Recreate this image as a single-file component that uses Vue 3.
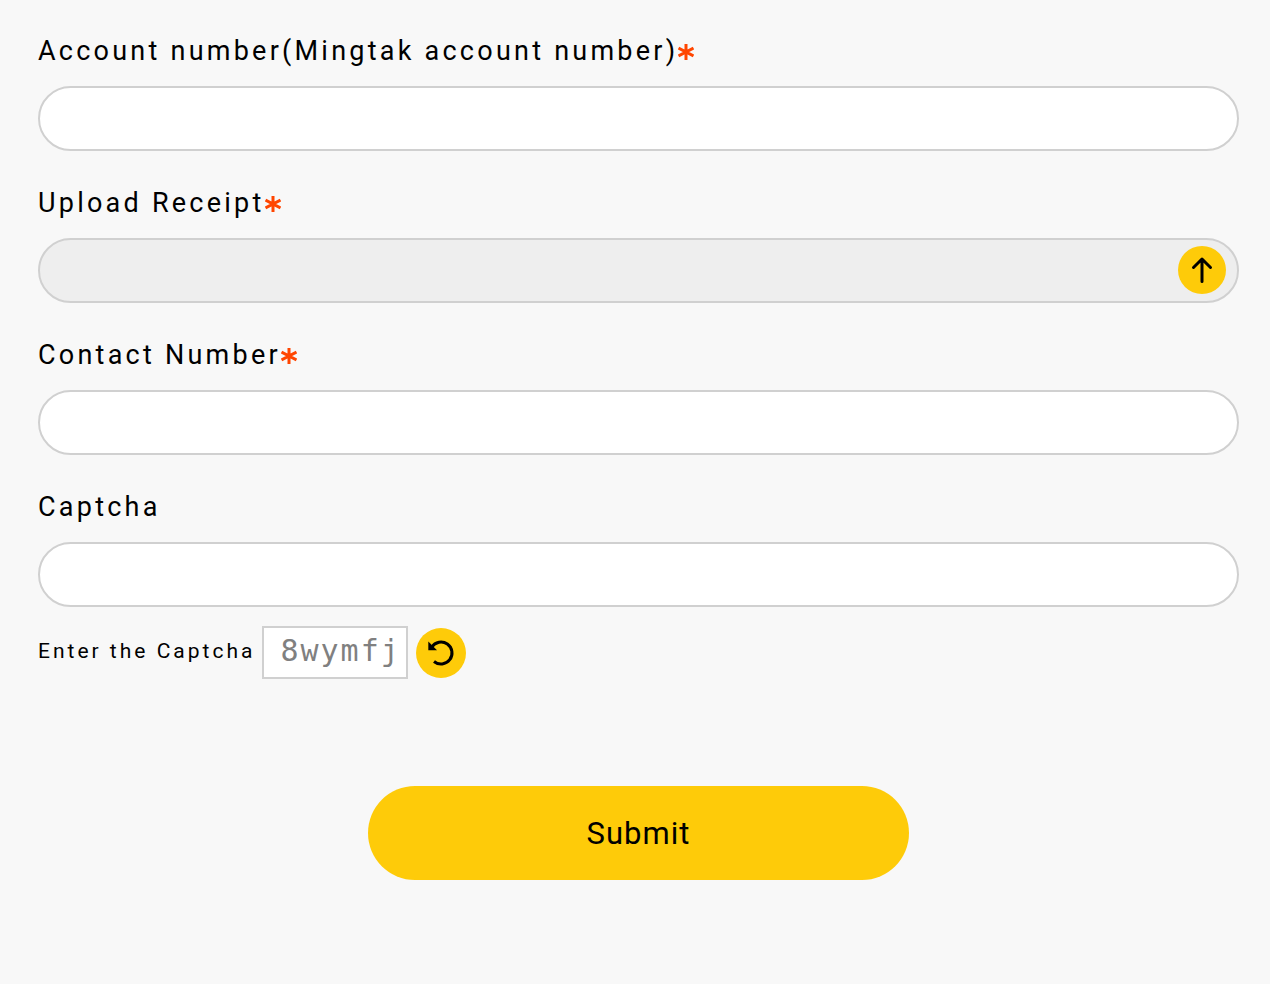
<template>
  <form class="receipt-form" @submit.prevent>
    <div v-for="field in fields" :key="field.id" class="field">
      <label :for="field.id" class="field-label">
        <span>{{ field.label }}</span>
        <svg v-if="field.required" class="required" viewBox="0 0 16 16" aria-hidden="true">
          <path d="M8 0v16M.500 4l15 8M15.500 4L.500 12" />
        </svg>
      </label>
      <div class="control">
        <input
          :id="field.id"
          v-model="form[field.id]"
          type="text"
          class="input"
          :required="field.required"
          :disabled="field.upload"
        >
        <button v-if="field.upload" type="button" class="round-btn upload-btn" aria-label="Choose file">
          <svg viewBox="0 0 48 48" aria-hidden="true">
            <path d="M24 35.500V13M15.500 21.500L24 13l8.500 8.500" />
          </svg>
        </button>
      </div>
    </div>

    <div class="captcha-row">
      <span class="captcha-hint">Enter the Captcha</span>
      <span class="captcha-code">{{ captcha }}</span>
      <button type="button" class="round-btn refresh-btn" aria-label="Refresh captcha">
        <svg viewBox="0 0 50 50" aria-hidden="true">
          <path d="M15.800 19A11 11 0 1 1 18 33.500" />
          <path class="arrow-head" d="M12.300 13.500V22.300H21Z" />
        </svg>
      </button>
    </div>

    <button type="submit" class="submit-btn">Submit</button>
  </form>
</template>

<script setup>
import { reactive, ref } from 'vue'

const fields = [
  { id: 'account', label: 'Account number(Mingtak account number)', required: true },
  { id: 'receipt', label: 'Upload Receipt', required: true, upload: true },
  { id: 'contact', label: 'Contact Number', required: true },
  { id: 'captcha', label: 'Captcha' }
]

const form = reactive({
  account: '',
  receipt: '',
  contact: '',
  captcha: ''
})

const captcha = ref('8wymfj')
</script>

<style>
body {
  background: #f8f8f8;
}
</style>

<style scoped>
.receipt-form {
  display: flex;
  flex-direction: column;
  padding: 33px 31px 104px 38px;
  font-family: Roboto, "Liberation Sans", sans-serif;
  color: #000;
}

.field {
  margin-bottom: 34px;
}

.field-label {
  display: flex;
  align-items: center;
  margin-bottom: 17px;
  font-size: 27px;
  line-height: 36px;
  letter-spacing: 0.12em;
}

.required {
  width: 16px;
  height: 16px;
  margin-top: 1px;
  fill: none;
  stroke: #ff4500;
  stroke-width: 3;
}

.control {
  position: relative;
}

.input {
  display: block;
  box-sizing: border-box;
  width: 100%;
  height: 65px;
  padding: 0 32px;
  border: 2px solid #d0d0d0;
  border-radius: 33px;
  background: #fff;
  font-family: inherit;
  font-size: 27px;
}

.input:disabled {
  background: #eee;
}

.round-btn {
  padding: 0;
  border: none;
  border-radius: 50%;
  background: #fecb09;
  cursor: pointer;
}

.round-btn svg {
  display: block;
  width: 100%;
  height: 100%;
  fill: none;
  stroke: #000;
  stroke-width: 3;
}

.upload-btn {
  position: absolute;
  top: 8px;
  right: 13px;
  width: 48px;
  height: 48px;
}

.upload-btn svg {
  stroke-linecap: round;
  stroke-linejoin: round;
}

.captcha-row {
  display: flex;
  align-items: center;
  margin-top: -15px;
}

.captcha-hint {
  margin-right: 7px;
  padding-bottom: 4px;
  font-size: 21px;
  line-height: 28px;
  letter-spacing: 3px;
}

.captcha-code {
  box-sizing: border-box;
  padding: 0 5px 4px 16px;
  border: 2px solid #d0d0d0;
  background: #fff;
  color: #808080;
  font-family: "DejaVu Sans Mono", monospace;
  font-size: 30px;
  line-height: 45px;
  letter-spacing: 2px;
}

.refresh-btn {
  width: 50px;
  height: 50px;
  margin-left: 8px;
}

.refresh-btn .arrow-head {
  fill: #000;
  stroke: none;
}

.submit-btn {
  align-self: center;
  width: 45%;
  height: 94px;
  margin-top: 107px;
  border: none;
  border-radius: 47px;
  background: #fecb09;
  color: #000;
  font-family: inherit;
  font-size: 31px;
  letter-spacing: 1px;
  cursor: pointer;
}
</style>
